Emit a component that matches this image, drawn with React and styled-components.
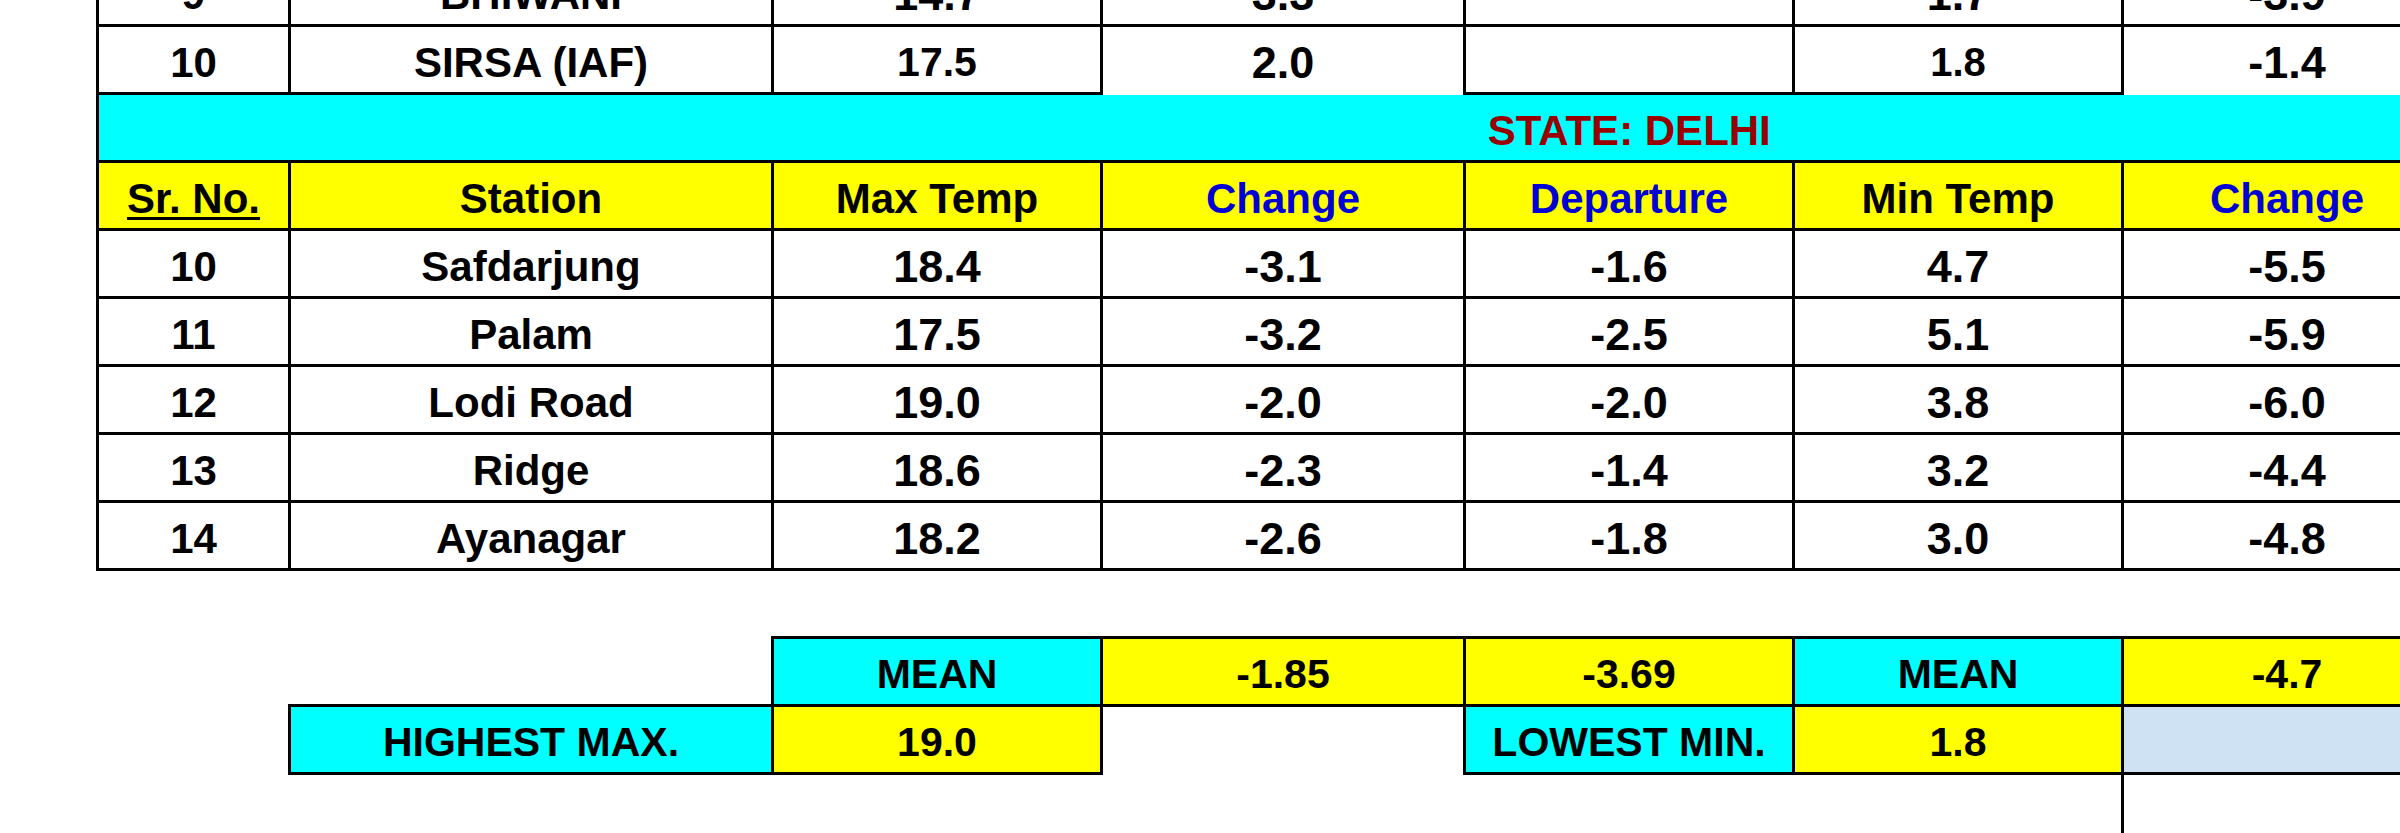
import styled, { createGlobalStyle } from "styled-components";

const GlobalStyle = createGlobalStyle`
  html, body {
    margin: 0;
    padding: 0;
    background: #fff;
    overflow: hidden;
  }
  body {
    font-family: "Liberation Sans", Arial, sans-serif;
    font-weight: bold;
  }
`;

const CYAN = "#00ffff";
const YELLOW = "#ffff00";
const PALE = "#cfe2f3";
const BLUE = "#0000d4";
const MAROON = "#990000";
const LINE = "3px solid #000";

const cols = [192, 483, 329, 363, 329, 329, 329, 354, 354];

const Page = styled.div`
  padding-left: 96px;
  margin-top: -44px;
`;

const Sheet = styled.table`
  border-collapse: collapse;
  table-layout: fixed;
  width: ${cols.reduce((a, b) => a + b, 0)}px;
`;

const Row = styled.tr`
  height: 68px;
`;

function edge(p, side) {
  return (p.$edges ?? "tlrb").includes(side) ? LINE : "none";
}

const Cell = styled.td`
  padding: 6px 0 0;
  text-align: center;
  vertical-align: middle;
  white-space: nowrap;
  overflow: hidden;
  font-size: ${(p) => p.$size || 42}px;
  color: ${(p) => p.$color || "#000"};
  background: ${(p) => p.$bg || "transparent"};
  border-top: ${(p) => edge(p, "t")};
  border-left: ${(p) => edge(p, "l")};
  border-right: ${(p) => edge(p, "r")};
  border-bottom: ${(p) => edge(p, "b")};
`;

const Under = styled.span`
  text-decoration: underline;
  text-decoration-thickness: 3px;
  text-underline-offset: 4px;
`;

const delhi = [
  ["10", "Safdarjung", "18.4", "-3.1", "-1.6", "4.7", "-5.5"],
  ["11", "Palam", "17.5", "-3.2", "-2.5", "5.1", "-5.9"],
  ["12", "Lodi Road", "19.0", "-2.0", "-2.0", "3.8", "-6.0"],
  ["13", "Ridge", "18.6", "-2.3", "-1.4", "3.2", "-4.4"],
  ["14", "Ayanagar", "18.2", "-2.6", "-1.8", "3.0", "-4.8"],
];

const heads = [
  { t: "Max Temp" },
  { t: "Change", c: BLUE },
  { t: "Departure", c: BLUE },
  { t: "Min Temp" },
  { t: "Change", c: BLUE },
];

export default function App() {
  return (
    <Page>
      <GlobalStyle />
      <Sheet>
        <colgroup>
          {cols.map((w, i) => (
            <col key={i} style={{ width: w }} />
          ))}
        </colgroup>
        <tbody>
          {/* Haryana rows, cut off at top */}
          <Row>
            <Cell>9</Cell>
            <Cell>BHIWANI</Cell>
            <Cell $size={45}>14.7</Cell>
            <Cell $size={45}>3.3</Cell>
            <Cell></Cell>
            <Cell $size={45}>1.7</Cell>
            <Cell $size={45}>-3.9</Cell>
            <Cell $edges="tb"></Cell>
            <Cell $edges="tb"></Cell>
          </Row>
          <Row>
            <Cell>10</Cell>
            <Cell>SIRSA (IAF)</Cell>
            <Cell $size={41}>17.5</Cell>
            <Cell $size={45} $edges="tlr">2.0</Cell>
            <Cell></Cell>
            <Cell $size={40}>1.8</Cell>
            <Cell $size={45} $edges="tlr">-1.4</Cell>
            <Cell $edges="t"></Cell>
            <Cell $edges="t"></Cell>
          </Row>

          <Row>
            <Cell colSpan={9} $bg={CYAN} $color={MAROON} $edges="lb">
              STATE: DELHI
            </Cell>
          </Row>

          <Row>
            <Cell $bg={YELLOW}>
              <Under>Sr. No.</Under>
            </Cell>
            <Cell $bg={YELLOW}>Station</Cell>
            {heads.map((h, i) => (
              <Cell key={i} $bg={YELLOW} $color={h.c}>
                {h.t}
              </Cell>
            ))}
            <Cell $bg={YELLOW}></Cell>
            <Cell $bg={YELLOW}></Cell>
          </Row>

          {delhi.map((r) => (
            <Row key={r[0]}>
              <Cell>{r[0]}</Cell>
              <Cell>{r[1]}</Cell>
              {r.slice(2).map((v, i) => (
                <Cell key={i} $size={45}>
                  {v}
                </Cell>
              ))}
              <Cell></Cell>
              <Cell></Cell>
            </Row>
          ))}

          <Row>
            <Cell colSpan={9} $edges=""></Cell>
          </Row>

          {/* summary */}
          <Row>
            <Cell colSpan={2} $edges=""></Cell>
            <Cell $bg={CYAN} $size={41}>MEAN</Cell>
            <Cell $bg={YELLOW} $size={41}>-1.85</Cell>
            <Cell $bg={YELLOW} $size={41}>-3.69</Cell>
            <Cell $bg={CYAN} $size={41}>MEAN</Cell>
            <Cell $bg={YELLOW} $size={41}>-4.7</Cell>
            <Cell colSpan={2} $edges=""></Cell>
          </Row>
          <Row>
            <Cell $edges=""></Cell>
            <Cell $bg={CYAN} $size={41}>HIGHEST MAX.</Cell>
            <Cell $bg={YELLOW} $size={41}>19.0</Cell>
            <Cell $edges=""></Cell>
            <Cell $bg={CYAN} $size={41}>LOWEST MIN.</Cell>
            <Cell $bg={YELLOW} $size={41}>1.8</Cell>
            <Cell colSpan={3} $bg={PALE} $edges="tlb"></Cell>
          </Row>
          <Row>
            <Cell colSpan={6} $edges=""></Cell>
            <Cell colSpan={3} $edges="l"></Cell>
          </Row>
        </tbody>
      </Sheet>
    </Page>
  );
}
